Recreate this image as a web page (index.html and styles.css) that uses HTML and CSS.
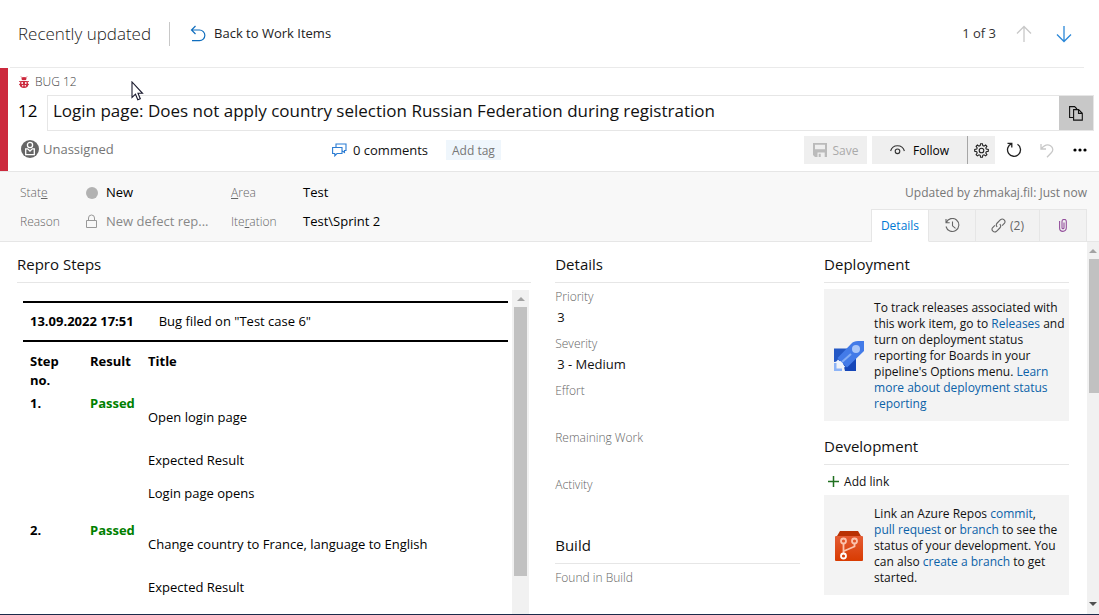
FILE: index.html
```html
<!DOCTYPE html>
<html lang="en">
<head>
<meta charset="utf-8">
<title>Bug 12 - Login page</title>
<link rel="stylesheet" href="styles.css">
</head>
<body>
<div class="app">
  <header class="topbar">
    <h1 class="topbar-title">Recently updated</h1>
    <a class="back" href="#">
      <svg width="16" height="18" viewBox="0 0 16 18" fill="none" stroke="#106ebe" stroke-width="1.2"><path d="M5.500 1 1.500 5l4 4M1.500 5H9.500a5.300 5.300 0 0 1 0 10.700H2"/></svg>
      Back to Work Items
    </a>
    <nav class="pager" aria-label="Work item paging">
      <span>1 of 3</span>
      <button class="plain" aria-label="Previous" disabled><svg width="16" height="18" viewBox="0 0 16 18" fill="none" stroke="#c8c8c8" stroke-width="1.300"><path d="M8 17V1.500M1 8.500l7-7 7 7"/></svg></button>
      <button class="plain" aria-label="Next"><svg width="16" height="18" viewBox="0 0 16 18" fill="none" stroke="#2b88d8" stroke-width="1.300"><path d="M8 1v15.500M1 9.500l7 7 7-7"/></svg></button>
    </nav>
  </header>

  <section class="item-head">
    <div class="item-type">
      <svg width="10" height="12" viewBox="0 0 10 12"><path d="M2 .5 3.500 2M8 .5 6.500 2M0 5.500h10M0 8.500h10" stroke="#cc293d" stroke-width=".8" fill="none"/><ellipse cx="5" cy="2.800" rx="2.600" ry="1.800" fill="#cc293d"/><ellipse cx="5" cy="8.200" rx="4.300" ry="3.800" fill="#cc293d"/><path d="M1 4.500h8" stroke="#fff" stroke-width=".8"/><circle cx="3.200" cy="7" r=".9" fill="#fff"/><circle cx="6.800" cy="7" r=".9" fill="#fff"/><circle cx="3.700" cy="9.800" r=".8" fill="#fff"/><circle cx="6.300" cy="9.800" r=".8" fill="#fff"/></svg>
      <span>BUG 12</span>
    </div>
    <div class="title-row">
      <label class="item-id" for="title">12</label>
      <div class="title-box">
        <input id="title" type="text" value="Login page: Does not apply country selection Russian Federation during registration">
        <button class="copy" aria-label="Copy to clipboard"><svg width="14" height="15" viewBox="0 0 14 15" fill="none" stroke="#111" stroke-width="1.100"><path d="M4 11.500H.6V.6h5L8 3M4.600 3.600h5l3.700 3.700v6.800H4.600zM9.500 3.600v3.800h3.800"/></svg></button>
      </div>
    </div>
    <div class="action-row">
      <div class="assignee">
        <svg width="18" height="18" viewBox="0 0 18 18"><circle cx="9" cy="9" r="9" fill="#666"/><g fill="none" stroke="#fff" stroke-width="1.300"><circle cx="9" cy="5" r="2.600"/><path d="M4.700 8.800h2L9 11l2.300-2.200h2v5.800H4.700z"/></g></svg>
        <span>Unassigned</span>
      </div>
      <a class="comments" href="#">
        <svg width="15" height="14" viewBox="0 0 15 14" fill="none" stroke="#2b7cd3" stroke-width="1.100"><path d="M4 4.500V1h10v6.500h-1.500v2L10 7.800M.6 4.500h9.400v6H5L2.800 12.800V10.500H.6z"/></svg>
        0 comments
      </a>
      <button class="tag">Add tag</button>
      <div class="actions">
        <button class="btn save" disabled><svg width="14" height="14" viewBox="0 0 14 14"><path fill="#bbb" d="M0 0h14v14h-2.300V9.500H4.500V14H2L0 12zM2 1.800v4.400h10V1.800zM5.700 10.800h2V14h-2z" fill-rule="evenodd"/></svg>Save</button>
        <button class="btn follow"><svg width="15" height="10" viewBox="0 0 15 10" fill="none" stroke="#333" stroke-width="1.100"><path d="M.6 6C1.500 2.800 4.300.8 7.500.8s6 2 6.900 5.200"/><circle cx="7.500" cy="6.300" r="2.300"/></svg>Follow</button>
        <button class="btn gear" aria-label="Follow settings"><svg width="15" height="15" viewBox="0 0 15 15" fill="none" stroke="#222" stroke-width="1.100"><circle cx="7.500" cy="7.500" r="2.300"/><path d="M6.600.7h1.800l.4 1.900 1.200.5 1.600-1.100 1.300 1.300-1.100 1.700.5 1.100 2 .4v1.900l-2 .4-.5 1.200 1.100 1.600-1.300 1.300-1.600-1.100-1.200.5-.4 2H6.600l-.4-2-1.200-.5-1.600 1.100-1.300-1.300L3.200 10l-.5-1.200-2-.4V6.500l2-.4.5-1.100-1.100-1.700L3.400 2 5 3.100l1.200-.5z"/></svg></button>
        <button class="plain tool" aria-label="Refresh"><svg width="16" height="16" viewBox="0 0 16 16" fill="none" stroke="#222" stroke-width="1.300"><path d="M1.500 1.300h4.300v4.300M5.700 1.700A6.500 6.500 0 1 0 11.500 2.300"/></svg></button>
        <button class="plain tool" aria-label="Undo" disabled><svg width="14" height="15" viewBox="0 0 14 15" fill="none" stroke="#c8c8c8" stroke-width="1.300"><path d="M1 1v5h5M1.300 5.800C4 2.500 7.500.8 10.500 2.800s2.800 5 .8 7L7 14.200"/></svg></button>
        <button class="plain tool" aria-label="More actions"><svg width="14" height="4" viewBox="0 0 14 4"><circle cx="2" cy="2" r="1.600"/><circle cx="7" cy="2" r="1.600"/><circle cx="12" cy="2" r="1.600"/></svg></button>
      </div>
    </div>
    <svg class="cursor" width="13" height="21" viewBox="0 0 13 21"><path d="M1 1v15.500l3.500-3.300 2.300 5.500 2.500-1-2.300-5.400h4.500z" fill="#fff" stroke="#1a1a2e" stroke-width="1.100"/></svg>
  </section>

  <section class="summary">
    <dl class="fields">
      <dt>Stat<u>e</u></dt>
      <dd><i class="dot"></i>New</dd>
      <dt><u>A</u>rea</dt>
      <dd>Test</dd>
      <dt>Reason</dt>
      <dd class="muted"><svg width="12" height="15" viewBox="0 0 12 15" fill="none" stroke="#999"><path d="M.5 6.500h10v7H.5zM2.500 6.500V4a3 3 0 0 1 6 0v2.500"/></svg>New defect rep...</dd>
      <dt>Ite<u>r</u>ation</dt>
      <dd>Test\Sprint 2</dd>
    </dl>
    <div class="summary-side">
      <p class="updated">Updated by zhmakaj.fil: Just now</p>
      <nav class="tabs" aria-label="Work item pages">
        <button class="tab active">Details</button>
        <button class="tab" aria-label="History"><svg width="15" height="15" viewBox="0 0 15 15" fill="none" stroke="#666" stroke-width="1.100"><path d="M1 1v3.700h3.700M1.300 4.500A6.500 6.500 0 1 1 1 8.500M7.500 3.500v4.300l3 2.500"/></svg></button>
        <button class="tab"><svg width="15" height="15" viewBox="0 0 15 15" fill="none" stroke="#666" stroke-width="1.100"><path d="M6.200 8.800a2.700 2.700 0 0 1 0-3.800L9.500 1.700a2.700 2.700 0 0 1 3.800 3.800l-2.200 2.200M8.800 6.200a2.700 2.700 0 0 1 0 3.800l-3.300 3.300a2.700 2.700 0 0 1-3.800-3.800l2.200-2.200"/></svg>(2)</button>
        <button class="tab" aria-label="Attachments"><svg width="8" height="13" viewBox="0 0 8 13" fill="none" stroke="#94509c" stroke-width="1.100"><path d="M.6 2v7a3.300 3.300 0 0 0 6.700 0V2.500a2 2 0 0 0-4.300 0v6.300a1 1 0 0 0 2 0V3.500"/></svg></button>
      </nav>
    </div>
  </section>

  <main class="body">
    <div class="columns">
      <section class="group repro">
        <h2>Repro Steps</h2>
        <div class="editor">
          <div class="editor-content">
            <div class="filed"><strong>13.09.2022 17:51</strong><span>Bug filed on "Test case 6"</span></div>
            <table class="steps">
              <thead><tr><th class="num">Step no.</th><th class="res">Result</th><th>Title</th></tr></thead>
              <tbody>
                <tr><th>1.</th><td class="pass">Passed</td><td><p>Open login page</p><p class="expected">Expected Result</p><p>Login page opens</p></td></tr>
                <tr><th>2.</th><td class="pass">Passed</td><td><p>Change country to France, language to English</p><p class="expected">Expected Result</p></td></tr>
              </tbody>
            </table>
          </div>
          <div class="scroll"><span class="up"></span><span class="thumb inner-thumb"></span></div>
        </div>
      </section>

      <div class="column">
        <section class="group">
          <h2>Details</h2>
          <dl class="details">
            <dt>Priority</dt><dd>3</dd>
            <dt>Severity</dt><dd>3 - Medium</dd>
            <dt>Effort</dt><dd></dd>
            <dt>Remaining Work</dt><dd></dd>
            <dt>Activity</dt><dd></dd>
          </dl>
        </section>
        <section class="group build">
          <h2>Build</h2>
          <dl class="details"><dt>Found in Build</dt><dd></dd></dl>
        </section>
      </div>

      <div class="column">
        <section class="group">
          <h2>Deployment</h2>
          <div class="card deploy">
            <svg width="30" height="30" viewBox="0 0 30 30"><path d="M0 7.500h14L7 20 0 21z" fill="#2458c5"/><path d="M9 22l13-9v17H11z" fill="#1546b8"/><path d="M30 0v10L13 26.500 3.500 17 17 3C19 .8 21 0 24 0z" fill="#437be8"/><path d="M4 18.500l7.500 7.500-3.500 1-6-6z" fill="#eef4fe"/><path d="M8 21l9-8" stroke="#83adf5" stroke-width="2"/><circle cx="22" cy="8" r="4" fill="#a9c6f8"/><path d="M0 22h2.500v5.500H8V30H0z" fill="#8db4f7"/></svg>
            <p>To track releases associated with this work item, go to <a class="term" href="#">Releases</a> and turn on deployment status reporting for Boards in your pipeline's Options menu. <a href="#">Learn more about deployment status reporting</a></p>
          </div>
        </section>
        <section class="group develop">
          <h2>Development</h2>
          <button class="add-link"><svg width="11" height="11" viewBox="0 0 11 11" stroke="#207020" stroke-width="1.500"><path d="M5.500 0v11M0 5.500h11"/></svg>Add link</button>
          <div class="card">
            <svg width="30" height="30" viewBox="0 0 30 30"><defs><linearGradient id="repo" x2="0" y2="1"><stop stop-color="#e45c34"/><stop offset="1" stop-color="#d83b01"/></linearGradient></defs><path d="M6 0h18l3 5H3z" fill="#b93205"/><rect x="1" y="5" width="28" height="25" rx="1" fill="url(#repo)"/><g fill="none" stroke="#fbc4ae" stroke-width="1.800"><circle cx="9.500" cy="10" r="2.500"/><circle cx="20.500" cy="10" r="2.500"/><path d="M9.500 12.500v10M20.500 12.500v3L10 20"/><circle cx="9.500" cy="25" r="2.500" stroke="#fff"/></g></svg>
            <p>Link an Azure Repos <a class="term" href="#">commit</a>, <a class="term" href="#">pull request</a> or <a class="term" href="#">branch</a> to see the status of your development. You can also <a class="term" href="#">create a branch</a> to get started.</p>
          </div>
        </section>
      </div>
    </div>
    <div class="scroll page-scroll"><span class="up"></span><span class="thumb page-thumb"></span><span class="down"></span></div>
  </main>
</div>
</body>
</html>
```
FILE: styles.css
```css
* { box-sizing: border-box; }

body {
  margin: 0;
  font-family: "Open Sans", "Noto Sans", sans-serif;
  font-size: 13px;
  line-height: 19px;
  color: #111;
  background: #fff;
}

h1, h2, p, dl, dd { margin: 0; }
svg { flex: none; display: block; }
a { color: #0b62a8; text-decoration: none; }
button, input { font: inherit; color: inherit; border: 0; background: none; padding: 0; margin: 0; }

.app { display: flex; flex-direction: column; height: 100vh; overflow: hidden; border-bottom: 1px solid #1b2a4a; }

.topbar { display: flex; align-items: center; flex: none; height: 68px; margin: 0 15px 0 10px; padding: 0 12px 0 8px; border-bottom: 1px solid #eaeaea; }
.topbar-title { font-size: 17px; line-height: 24px; font-weight: 300; color: #222; padding-right: 18px; border-right: 1px solid #c8c8c8; }
.back { display: flex; align-items: center; gap: 8px; margin-left: 20px; color: #222; }
.pager { display: flex; align-items: center; gap: 20px; margin-left: auto; color: #333; }
.plain { display: flex; align-items: center; justify-content: center; }
.pager .plain + .plain { margin-left: 4px; }

.item-head { position: relative; flex: none; border-left: 8px solid #cc293d; }
.item-type { display: flex; align-items: center; gap: 6px; height: 27px; padding-left: 11px; font-size: 12px; font-weight: 300; color: #444; }
.title-row { display: flex; align-items: center; padding: 0 5px 0 10px; font-size: 17px; line-height: 24px; }
.item-id { flex: none; width: 29px; padding-bottom: 4px; color: #000; }
.title-box { display: flex; flex: 1; height: 36px; border: 1px solid #e6e6e6; }
.title-box input { flex: 1; min-width: 0; height: 30px; padding-left: 5px; line-height: 30px; }
.copy { display: flex; align-items: center; justify-content: center; width: 34px; background: #c8c8c8; }
.action-row { display: flex; align-items: center; height: 40px; padding: 0 10px 2px 13px; }
.assignee { display: flex; align-items: center; gap: 4px; width: 311px; color: #767676; padding-bottom: 2px; }
.comments { display: flex; align-items: center; gap: 6px; color: #111; }
.tag { height: 20px; margin-left: 18px; padding: 0 6px; background: #eff6fc; color: #777; font-size: 12px; }
.actions { display: flex; align-items: center; margin-left: auto; }
.btn { display: flex; align-items: center; justify-content: center; gap: 8px; height: 28px; background: #efefef; font-size: 12px; }
.save { width: 63px; margin-right: 5px; gap: 6px; color: #aaa; }
.follow { width: 96px; color: #000; border-right: 1px solid #a6a6a6; }
.gear { width: 27px; margin-right: 2px; }
.tool { width: 33px; height: 28px; }
.tool:last-child { margin-right: -7px; }
.cursor { position: absolute; left: 123px; top: 13px; }

.summary { display: flex; flex: none; height: 71px; border-top: 1px solid #e6e6e6; border-bottom: 1px solid #e6e6e6; background: #f8f8f8; }
.fields { display: grid; grid-template-columns: 66px 145px 72px auto; align-content: start; row-gap: 10px; padding: 11px 0 0 20px; }
.fields dt { font-size: 12px; color: #666; }
.fields dt, .details dt { font-weight: 300; }
.fields dd { display: flex; align-items: center; gap: 8px; color: #000; }
.fields .muted { color: #888; }
.dot { width: 12px; height: 12px; border-radius: 50%; background: #b2b2b2; }
.summary-side { display: flex; flex-direction: column; justify-content: space-between; align-items: flex-end; margin-left: auto; padding: 11px 12px 0 0; }
.updated { color: #777; font-size: 12px; }
.tabs { display: flex; height: 33px; margin-bottom: -1px; border: 1px solid #e6e6e6; border-bottom: 0; }
.tab { display: flex; align-items: center; justify-content: center; gap: 4px; width: 47px; font-size: 12px; color: #666; background: #f2f2f2; border-right: 1px solid #e6e6e6; border-bottom: 1px solid #e6e6e6; }
.tab.active { width: 57px; background: #fff; border-bottom-color: #fff; color: #0078d4; }
.tab:nth-child(3) { width: 64px; }
.tab:last-child { width: 46px; border-right: 0; }

.body { display: flex; flex: 1; min-height: 0; }
.columns { display: grid; grid-template-columns: 21fr 10fr 10fr; gap: 24px; flex: 1; min-width: 0; min-height: 0; padding: 12px 18px 0 17px; overflow: hidden; }
.columns > * { min-width: 0; min-height: 0; }
.group h2 { font-size: 15px; font-weight: 400; line-height: 21px; padding-bottom: 7px; border-bottom: 1px solid #e6e6e6; color: #111; }

.repro { display: flex; flex-direction: column; }
.editor { display: flex; flex: 1; min-height: 0; margin: 7px 2px 0 6px; overflow: hidden; }
.editor-content { flex: 1; min-width: 0; margin-right: 4px; padding-top: 11px; overflow: hidden; color: #000; }
.filed { display: flex; gap: 25px; padding: 9px 7px; border-top: 2px solid #000; border-bottom: 2px solid #000; }
.steps { width: 100%; margin-top: 10px; border-collapse: collapse; table-layout: fixed; text-align: left; }
.steps th, .steps td { padding: 0 0 4px; vertical-align: top; }
.steps th:first-child { padding-left: 7px; }
.steps td:last-child { padding-bottom: 18px; }
.steps .num { width: 67px; padding-right: 20px; }
.steps .res { width: 58px; }
.steps p { margin-top: 14px; }
.steps .expected { margin-top: 24px; }
.steps .pass { color: #008000; font-weight: 700; }

.details { padding-top: 4px; }
.details dt { color: #666; font-size: 12px; }
.details dd { height: 28px; padding: 2px; }
.build { margin-top: 13px; }

.card { display: flex; align-items: center; gap: 10px; padding: 11px 10px 9px; background: #f3f3f3; font-size: 12px; line-height: 16px; }
.term { display: inline-block; }
.deploy { margin-top: 6px; padding-right: 2px; }
.develop { margin-top: 15px; }
.add-link { display: flex; align-items: center; gap: 5px; padding: 7px 4px 4px; font-size: 12px; }

.scroll { display: flex; flex-direction: column; align-items: center; flex: none; width: 17px; background: #f1f1f1; }
.up { margin: 7px 0 6px; border: 4px solid transparent; border-top: 0; border-bottom-color: #a3a3a3; }
.down { margin: auto 0 8px; border: 4px solid transparent; border-bottom: 0; border-top-color: #505050; }
.thumb { width: 13px; background: #c1c1c1; }
.inner-thumb { height: 83%; }
.page-scroll { width: 12px; }
.page-thumb { width: 10px; height: 36%; margin-left: 2px; }
```
